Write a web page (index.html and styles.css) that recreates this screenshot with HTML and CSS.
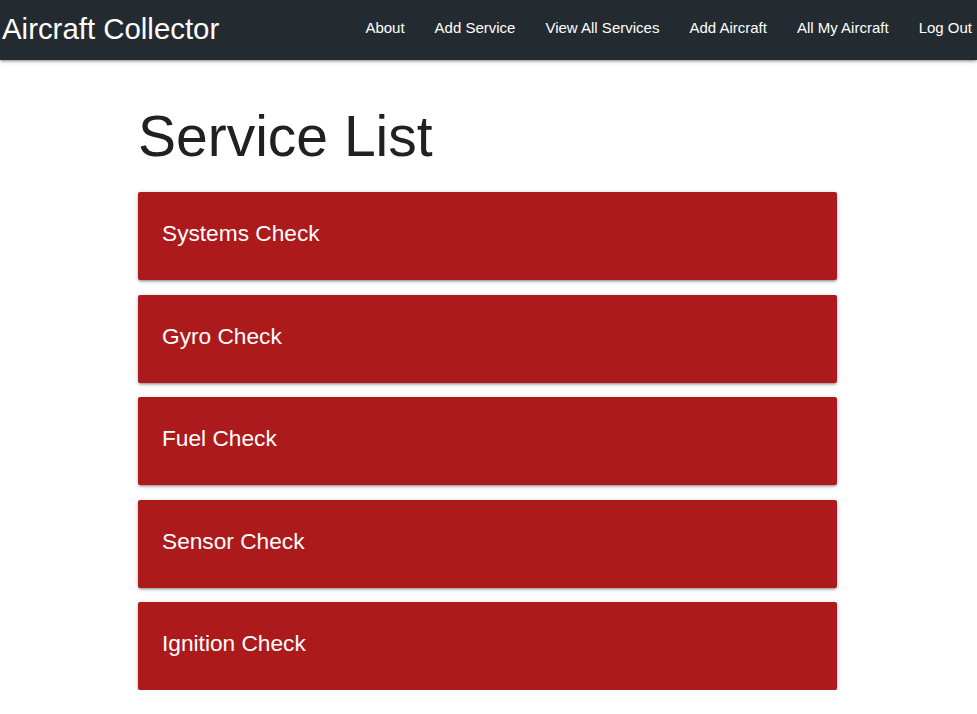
FILE: index.html
```html
<!DOCTYPE html>
<html lang="en">
<head>
<meta charset="utf-8">
<title>Aircraft Collector</title>
<link rel="stylesheet" href="styles.css">
</head>
<body>
<nav class="navbar">
  <a class="brand" href="#">Aircraft Collector</a>
  <ul class="nav-links">
    <li><a href="#">About</a></li>
    <li><a href="#">Add Service</a></li>
    <li><a href="#">View All Services</a></li>
    <li><a href="#">Add Aircraft</a></li>
    <li><a href="#">All My Aircraft</a></li>
    <li><a href="#">Log Out</a></li>
  </ul>
</nav>
<main class="container">
  <h1 class="page-title">Service List</h1>
  <div class="card-list">
    <a class="card" href="#"><span class="card-title">Systems Check</span></a>
    <a class="card" href="#"><span class="card-title">Gyro Check</span></a>
    <a class="card" href="#"><span class="card-title">Fuel Check</span></a>
    <a class="card" href="#"><span class="card-title">Sensor Check</span></a>
    <a class="card" href="#"><span class="card-title">Ignition Check</span></a>
  </div>
</main>
</body>
</html>
```
FILE: styles.css
```css
* { box-sizing: border-box; }
html, body {
  margin: 0;
  padding: 0;
  background: #ffffff;
  font-family: "Liberation Sans", Arial, Helvetica, sans-serif;
  color: #212121;
}
a { text-decoration: none; color: inherit; }

.navbar {
  height: 60px;
  background: #232b31;
  display: flex;
  align-items: center;
  justify-content: space-between;
  padding: 0 5px 0 2px;
  box-shadow: 0 2px 2px 0 rgba(0,0,0,.14), 0 3px 1px -2px rgba(0,0,0,.12), 0 1px 5px 0 rgba(0,0,0,.2);
}
.brand {
  color: #ffffff;
  font-size: 29.4px;
  line-height: 56px;
  margin-top: -3px;
}
.nav-links {
  list-style: none;
  margin: -4px 0 0;
  padding: 0;
  display: flex;
  gap: 30px;
}
.nav-links a {
  color: #ffffff;
  font-size: 15px;
  line-height: 56px;
}

.container {
  width: 699px;
  margin: 0 auto 0 138px;
}
.page-title {
  font-size: 57px;
  font-weight: 400;
  line-height: 64px;
  margin: 44px 0 24px;
}
.card-list {
  display: flex;
  flex-direction: column;
  gap: 14.5px;
}
.card {
  display: block;
  background: #ad1a1c;
  border-radius: 2px;
  padding: 23px 24px 25px;
  height: 88px;
  box-shadow: 0 2px 2px 0 rgba(0,0,0,.14), 0 3px 1px -2px rgba(0,0,0,.12), 0 1px 5px 0 rgba(0,0,0,.2);
}
.card-title {
  color: #ffffff;
  font-size: 22.7px;
  line-height: 36px;
}
```
